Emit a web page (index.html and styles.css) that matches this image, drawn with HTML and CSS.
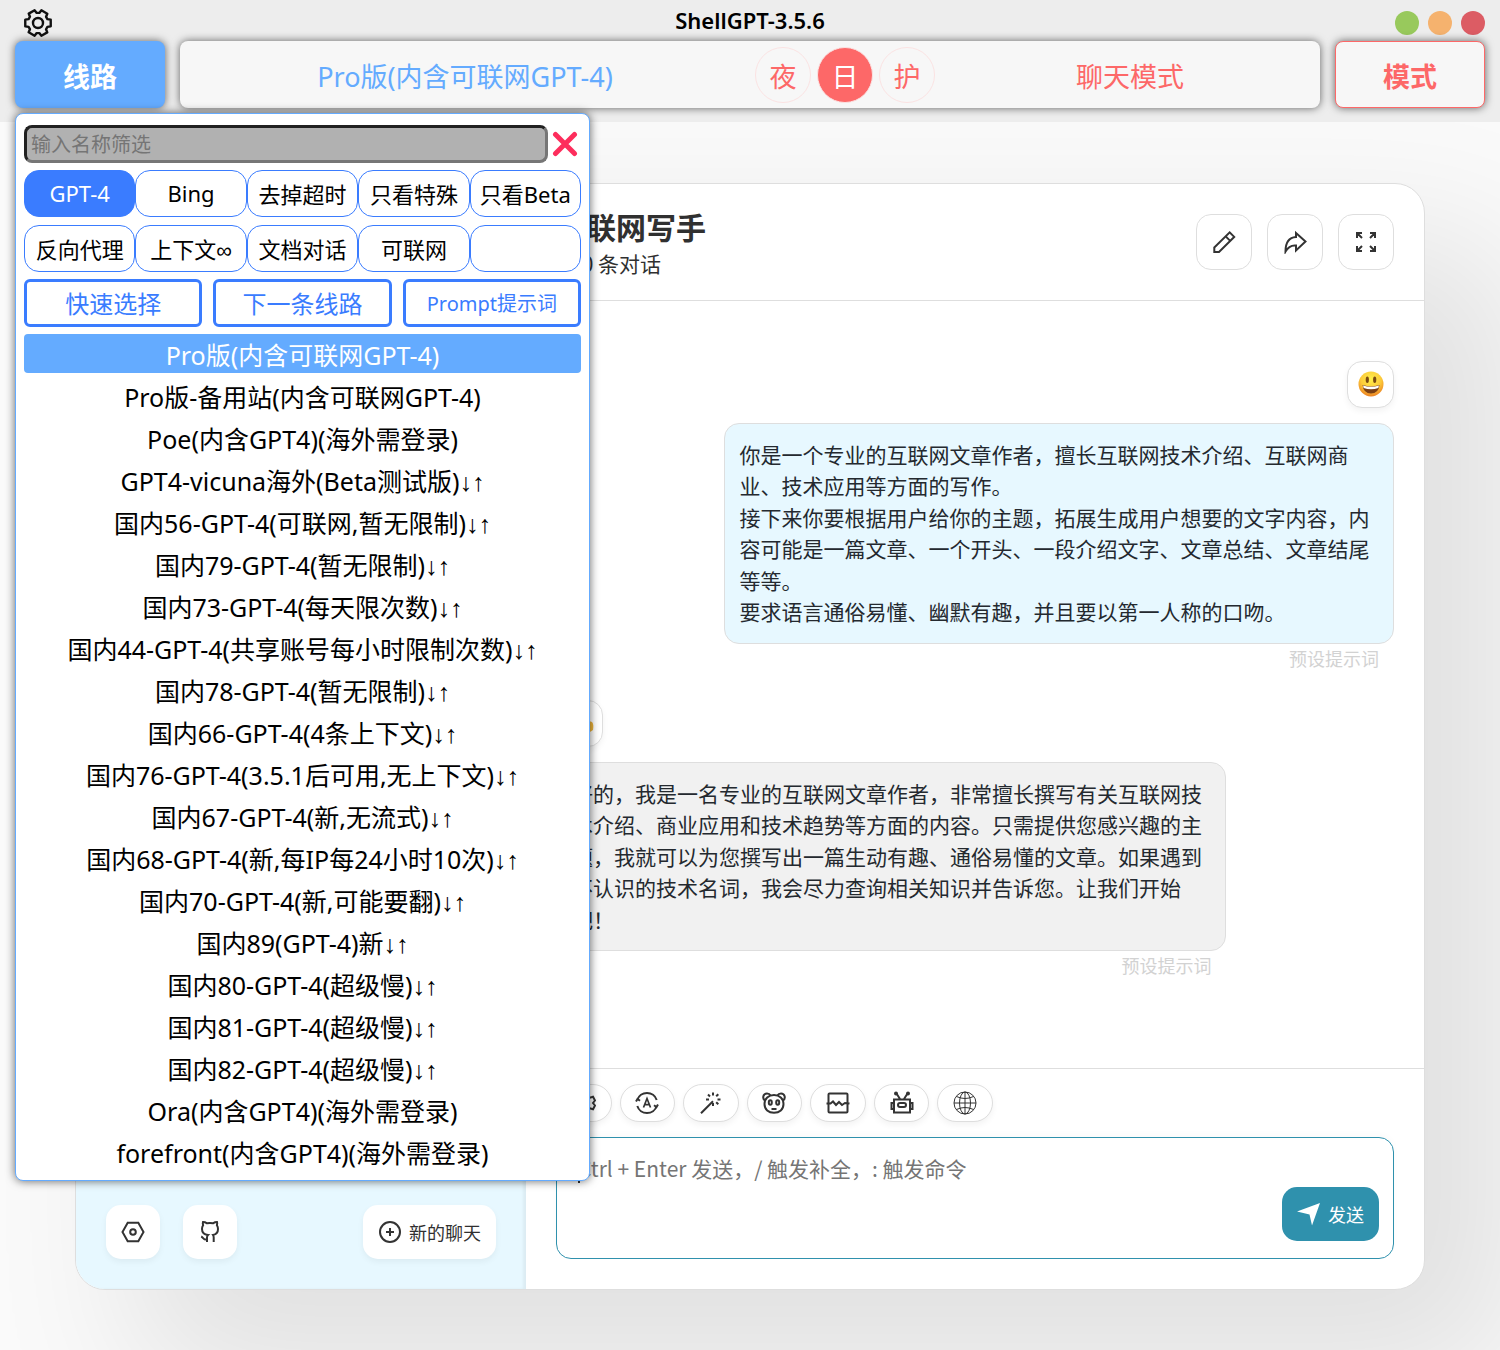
FILE: index.html
```html
<!DOCTYPE html>
<html lang="zh-CN">
<head>
<meta charset="utf-8">
<meta name="viewport" content="width=device-width, initial-scale=1">
<title>ShellGPT-3.5.6</title>
<link rel="stylesheet" href="styles.css">
</head>
<body>
<header class="shell">
  <div class="titlebar">
    <button class="plain gear" aria-label="设置">
      <svg width="28" height="28" viewBox="0 0 28 28" fill="none" stroke="#111" stroke-width="2.4" stroke-linejoin="round"><path d="M10.6 1.3 H17.4 L17.9 4.6 L20.2 5.9 L23.3 4.7 L26.7 10.5 L24.1 12.6 V15.4 L26.7 17.5 L23.3 23.3 L20.2 22.1 L17.9 23.4 L17.4 26.7 H10.6 L10.1 23.4 L7.8 22.1 L4.7 23.3 L1.3 17.5 L3.9 15.4 V12.6 L1.3 10.5 L4.7 4.7 L7.8 5.9 L10.1 4.6 Z" transform="rotate(30 14 14)"/><circle cx="14" cy="14" r="5"/></svg>
    </button>
    <h1 class="app-title">ShellGPT-3.5.6</h1>
    <div class="dots">
      <button class="dot green" aria-label="最小化"></button>
      <button class="dot orange" aria-label="最大化"></button>
      <button class="dot red" aria-label="关闭"></button>
    </div>
  </div>
  <nav class="toolbar">
    <button class="side-btn line-btn">线路</button>
    <div class="status">
      <span class="status-line">Pro版(内含可联网GPT-4)</span>
      <div class="themes">
        <button class="theme">夜</button>
        <button class="theme on">日</button>
        <button class="theme">护</button>
      </div>
      <span class="status-mode">聊天模式</span>
    </div>
    <button class="side-btn mode-btn">模式</button>
  </nav>
  <section class="panel" aria-label="线路">
    <div class="search">
      <input class="search-box" type="text" placeholder="输入名称筛选" aria-label="输入名称筛选">
      <button class="plain close" aria-label="关闭">
        <svg width="26" height="26" viewBox="0 0 26 26" fill="none" stroke="#fd2d5c" stroke-width="5" stroke-linecap="round"><path d="M3.5 3.5 L22.5 22.5 M22.5 3.5 L3.5 22.5"/></svg>
      </button>
    </div>
    <div class="filters">
      <button class="filter on">GPT-4</button>
      <button class="filter">Bing</button>
      <button class="filter">去掉超时</button>
      <button class="filter">只看特殊</button>
      <button class="filter">只看Beta</button>
      <button class="filter">反向代理</button>
      <button class="filter">上下文∞</button>
      <button class="filter">文档对话</button>
      <button class="filter">可联网</button>
      <button class="filter" aria-label="空"></button>
    </div>
    <div class="quick">
      <button class="quick-btn">快速选择</button>
      <button class="quick-btn">下一条线路</button>
      <button class="quick-btn small">Prompt提示词</button>
    </div>
    <ul class="lines">
      <li><button class="line on">Pro版(内含可联网GPT-4)</button></li>
      <li><button class="line">Pro版-备用站(内含可联网GPT-4)</button></li>
      <li><button class="line">Poe(内含GPT4)(海外需登录)</button></li>
      <li><button class="line">GPT4-vicuna海外(Beta测试版)↓↑</button></li>
      <li><button class="line">国内56-GPT-4(可联网,暂无限制)↓↑</button></li>
      <li><button class="line">国内79-GPT-4(暂无限制)↓↑</button></li>
      <li><button class="line">国内73-GPT-4(每天限次数)↓↑</button></li>
      <li><button class="line">国内44-GPT-4(共享账号每小时限制次数)↓↑</button></li>
      <li><button class="line">国内78-GPT-4(暂无限制)↓↑</button></li>
      <li><button class="line">国内66-GPT-4(4条上下文)↓↑</button></li>
      <li><button class="line">国内76-GPT-4(3.5.1后可用,无上下文)↓↑</button></li>
      <li><button class="line">国内67-GPT-4(新,无流式)↓↑</button></li>
      <li><button class="line">国内68-GPT-4(新,每IP每24小时10次)↓↑</button></li>
      <li><button class="line">国内70-GPT-4(新,可能要翻)↓↑</button></li>
      <li><button class="line">国内89(GPT-4)新↓↑</button></li>
      <li><button class="line">国内80-GPT-4(超级慢)↓↑</button></li>
      <li><button class="line">国内81-GPT-4(超级慢)↓↑</button></li>
      <li><button class="line">国内82-GPT-4(超级慢)↓↑</button></li>
      <li><button class="line">Ora(内含GPT4)(海外需登录)</button></li>
      <li><button class="line">forefront(内含GPT4)(海外需登录)</button></li>
    </ul>
  </section>
</header>

<main class="stage">
  <div class="card">
    <aside class="sidebar">
      <div class="side-tools">
        <button class="tile" aria-label="设置">
          <svg class="icon" viewBox="0 0 24 24"><path d="M6.7 2.8 H17.3 L22.5 12 L17.3 21.2 H6.7 L1.5 12 Z"/><circle cx="12" cy="12" r="2.8"/></svg>
        </button>
        <a class="tile" href="#" aria-label="GitHub">
          <svg class="icon" viewBox="0 0 24 24"><path d="M9 22 V17.5 C9 16.3 9.3 15.6 10 15 C6.5 14.5 4 12.8 4 9 C4 7.5 4.4 6.3 5.1 5.3 C4.7 4 4.7 3 5 2 C6.3 2 7.8 2.5 9 3.3 C11 2.9 13 2.9 15 3.3 C16.2 2.5 17.7 2 19 2 C19.3 3 19.3 4 18.9 5.3 C19.6 6.3 20 7.5 20 9 C20 12.8 17.5 14.5 15 15 C15.5 15.7 15.7 16.5 15.7 17.5 V22 M9 19.5 C5.5 20.3 5.5 17.5 3.2 16.5"/></svg>
        </a>
      </div>
      <button class="tile new-chat">
        <svg class="icon" viewBox="0 0 24 24"><circle cx="12" cy="12" r="10"/><path d="M12 8 V16 M8 12 H16"/></svg>
        新的聊天
      </button>
    </aside>

    <section class="chat">
      <div class="chat-head">
        <div class="chat-heading">
          <h2 class="chat-title">互联网写手</h2>
          <p class="chat-sub">共 0 条对话</p>
        </div>
        <div class="head-tools">
          <button class="square" aria-label="编辑"><svg class="icon" viewBox="0 0 24 24"><path d="M2.3 17.5 L17.7 2.4 L22.2 6.9 L7 22 H2.3 Z M13.7 6.4 L18.2 10.9"/></svg></button>
          <button class="square" aria-label="分享"><svg class="icon" viewBox="0 0 24 24"><path d="M13 3 L22.5 11.5 L13 20.5 V15.5 C8.5 15 5 17 2.5 21.5 C2.5 13 6 7.5 13 7 Z"/></svg></button>
          <button class="square" aria-label="全屏"><svg class="icon" viewBox="0 0 24 24"><path d="M3 8 V3 H8 M3 3 L8 8 M16 3 H21 V8 M21 3 L16 8 M3 16 V21 H8 M3 21 L8 16 M16 21 H21 V16 M21 21 L16 16"/></svg></button>
        </div>
      </div>

      <div class="messages">
        <article class="message mine">
          <div class="avatar">
            <svg width="26" height="26" viewBox="0 0 26 26"><defs><radialGradient id="face" cx=".5" cy=".3" r=".75"><stop offset="0" stop-color="#fff04a"/><stop offset=".55" stop-color="#fcc93a"/><stop offset="1" stop-color="#e8731c"/></radialGradient></defs><circle cx="13" cy="13" r="12.5" fill="url(#face)"/><ellipse cx="9.3" cy="8.8" rx="1.6" ry="3.2" fill="#7a4a12"/><ellipse cx="16.7" cy="8.8" rx="1.6" ry="3.2" fill="#7a4a12"/><path d="M4.5 14 Q13 16.8 21.5 14 Q20.5 22.5 13 22.5 Q5.5 22.5 4.5 14 Z" fill="#7a3f14"/><path d="M5 14.5 Q13 17 21 14.5 L20.3 17 Q13 19.5 5.7 17 Z" fill="#fff"/></svg>
          </div>
          <div class="bubble">你是一个专业的互联网文章作者，擅长互联网技术介绍、互联网商业、技术应用等方面的写作。<br>接下来你要根据用户给你的主题，拓展生成用户想要的文字内容，内容可能是一篇文章、一个开头、一段介绍文字、文章总结、文章结尾等等。<br>要求语言通俗易懂、幽默有趣，并且要以第一人称的口吻。</div>
          <p class="note">预设提示词</p>
        </article>
        <article class="message">
          <div class="avatar">
            <svg width="28" height="26" viewBox="0 0 28 26"><path d="M2 10 Q8 4 14 8 L26 12 Q28 14 27 20 Q22 24 12 23 Q4 22 2 10 Z" fill="#f0b63c"/></svg>
          </div>
          <div class="bubble">好的，我是一名专业的互联网文章作者，非常擅长撰写有关互联网技术介绍、商业应用和技术趋势等方面的内容。只需提供您感兴趣的主题，我就可以为您撰写出一篇生动有趣、通俗易懂的文章。如果遇到不认识的技术名词，我会尽力查询相关知识并告诉您。让我们开始吧！</div>
          <p class="note">预设提示词</p>
        </article>
      </div>

      <div class="composer">
        <div class="actions">
          <button class="pill" aria-label="对话设置"><svg class="icon" viewBox="0 0 24 24"><path d="M9.5 2 H14.5 L15.2 5 L18 6.6 L21 5.7 L23 9.5 L21 12 L23 14.5 L21 18.3 L18 17.4 L15.2 19 L14.5 22 H9.5 L8.8 19 L6 17.4 L3 18.3 L1 14.5 L3 12 L1 9.5 L3 5.7 L6 6.6 L8.8 5 Z"/><circle cx="12" cy="12" r="3"/></svg></button>
          <button class="pill" aria-label="自动主题"><svg class="icon" viewBox="0 0 24 24"><path d="M2.3 9 A10.2 10.2 0 0 1 21.7 9 M21.7 15 A10.2 10.2 0 0 1 2.3 15 M1 10.5 L2.5 8 L5 9.8 M23 13.5 L21.5 16 L19 14.2"/><path stroke-width="1.7" d="M8.5 16.5 L12 7.5 L15.5 16.5 M9.7 13.7 H14.3"/></svg></button>
          <button class="pill" aria-label="快捷指令"><svg class="icon" viewBox="0 0 24 24"><path d="M2 22.2 L14 10.2 M14 1.5 V4.5 M14 12 V15 M7 8.5 H10 M18.5 8.5 H21.5 M9 3.5 L11 5.5 M19.3 3.2 L17.2 5.3 M17.2 11.2 L19.3 13.3"/></svg></button>
          <button class="pill" aria-label="面具"><svg class="icon" viewBox="0 0 24 24"><path d="M3 9.5 C0 7.5 1 2.5 5 2.5 C7 2.5 8 3.5 8.5 4.5 M15.5 4.5 C16 3.5 17 2.5 19 2.5 C23 2.5 24 7.5 21 9.5"/><path d="M12 4 C17.5 4 21.5 7.5 21.5 13 C21.5 18.5 17.5 21.8 12 21.8 C6.5 21.8 2.5 18.5 2.5 13 C2.5 7.5 6.5 4 12 4 Z M9.5 18 H14.5"/><ellipse cx="8.3" cy="11.5" rx="1.5" ry="2.2"/><ellipse cx="15.7" cy="11.5" rx="1.5" ry="2.2"/></svg></button>
          <button class="pill" aria-label="清除聊天"><svg class="icon" viewBox="0 0 24 24"><path d="M2.500 12 V3.500 Q2.500 2.500 3.500 2.500 H20.500 Q21.500 2.500 21.500 3.500 V12 M2.500 13 V20.500 Q2.500 21.500 3.500 21.500 H20.500 Q21.500 21.500 21.500 20.500 V13 M.5 12.500 H4.500 L7 10.500 L10 14 L13 11 L16 14 L19 12 L23.500 12.500"/></svg></button>
          <button class="pill" aria-label="模型"><svg class="icon" viewBox="0 0 24 24"><path d="M4 8.500 H20 V21.500 H4 Z M4 12 H1.500 V18 H4 M20 12 H22.500 V18 H20 M10 8 L6.500 2.500 M14 8 L17.500 2.500"/><rect x="8" y="12" width="8" height="4" rx="2"/><circle cx="6" cy="2.500" r="1"/><circle cx="18" cy="2.500" r="1"/></svg></button>
          <button class="pill" aria-label="联网"><svg class="icon thin" viewBox="0 0 24 24"><circle cx="12" cy="12" r="11"/><ellipse cx="12" cy="12" rx="5.5" ry="11"/><path d="M12 1 V23 M1 12 H23 M3.5 5.5 Q12 9.5 20.5 5.5 M3.5 18.5 Q12 14.5 20.5 18.5"/></svg></button>
        </div>
        <div class="entry">
          <textarea class="entry-box" placeholder="Ctrl + Enter 发送，/ 触发补全，: 触发命令" aria-label="消息"></textarea>
          <span class="caret"></span>
          <button class="send">
            <svg width="24" height="24" viewBox="0 0 24 24"><path d="M23 1 L15 23.5 L12.5 12.5 L0 9.5 Z" fill="#fff"/></svg>
            发送
          </button>
        </div>
      </div>
    </section>
  </div>
</main>
</body>
</html>
```

FILE: styles.css
```css
:root {
  --blue: #64abff;
  --strong-blue: #3a7cff;
  --coral: #fd6868;
  --teal: #2f91ad;
  --ink: #303030;
  --line: #dedede;
  --ui: "Noto Sans", "Liberation Sans", "Noto Sans CJK SC", sans-serif;
  --text: "Noto Sans CJK SC", sans-serif;
}

* { box-sizing: border-box; }

body {
  margin: 0;
  background: #fafafa;
  color: var(--ink);
  font-family: var(--text);
}

h1, h2, p, ul { margin: 0; padding: 0; }
ul { list-style: none; }
button { margin: 0; padding: 0; border: 0; font: inherit; color: inherit; cursor: pointer; }
svg { display: block; }
.plain { background: none; }

/* Window bar */
.shell {
  position: relative;
  z-index: 2;
  height: 122px;
  padding: 0 15px;
  background: #ededed;
  font-family: var(--ui);
  color: #000;
}

.titlebar {
  display: grid;
  grid-template-columns: 1fr auto 1fr;
  align-items: center;
  height: 41px;
  padding-top: 4px;
}
.gear { justify-self: start; margin-left: 9px; }
.app-title { font-size: 22px; font-weight: 600; line-height: 24px; padding-bottom: 6px; }
.dots { display: flex; gap: 9px; justify-self: end; }
.dot { width: 24px; height: 24px; border-radius: 50%; }
.green { background: #98c95c; }
.orange { background: #f5b26e; }
.red { background: #dc5c64; }

.toolbar {
  display: grid;
  grid-template-columns: 150px 1fr 150px;
  gap: 15px;
  height: 67px;
  font-size: 27px;
}
.side-btn {
  padding-top: 2px;
  border-radius: 8px;
  font-weight: 700;
  box-shadow: 0 0 8px rgba(0, 0, 0, .6);
}
.line-btn { background: var(--blue); color: #fff; }
.mode-btn { background: #f7f7f7; color: var(--coral); border: 1px solid var(--coral); }

.status {
  display: grid;
  grid-template-columns: 3fr 1fr 2fr;
  align-items: center;
  justify-items: center;
  border-radius: 8px;
  background: #f7f7f7;
  box-shadow: 0 0 8px rgba(0, 0, 0, .6);
}
.status-line { padding-top: 2px; color: var(--blue); }
.status-mode { padding-top: 2px; color: var(--coral); }
.themes { display: flex; gap: 6px; }
.theme {
  width: 56px;
  height: 56px;
  padding-top: 2px;
  border: 1px solid #fbe3e3;
  border-radius: 50%;
  background: transparent;
  color: var(--coral);
}
.theme.on { background: var(--coral); color: #fff; }

/* Line picker, dropped over the page */
.panel {
  position: absolute;
  top: 113px;
  left: 15px;
  width: 575px;
  padding: 11px 8px 9px;
  border: 1px solid var(--blue);
  border-radius: 8px;
  background: #fff;
  box-shadow: 0 0 10px rgba(0, 0, 0, .6);
}
.search { display: flex; align-items: center; gap: 4px; padding-right: 3px; }
.search-box {
  flex: 1;
  min-width: 0;
  height: 38px;
  padding: 0 4px;
  border: 3px inset #767676;
  border-radius: 8px;
  background: #b1b1b1;
  font: 20px var(--ui);
}
.search-box::placeholder { color: #757575; }

.filters {
  display: grid;
  grid-template-columns: repeat(5, 1fr);
  gap: 8px 0;
  margin-top: 7px;
}
.filter {
  height: 47px;
  padding-bottom: 2px;
  border: 1px solid var(--strong-blue);
  border-radius: 15px;
  background: #fff;
  font-size: 22px;
  white-space: nowrap;
}
.filter.on { background: var(--strong-blue); color: #fff; }

.quick {
  display: grid;
  grid-template-columns: repeat(3, 1fr);
  gap: 11px;
  margin-top: 7px;
}
.quick-btn {
  height: 48px;
  padding-bottom: 2px;
  border: 3px solid var(--strong-blue);
  border-radius: 6px;
  background: #fff;
  color: var(--strong-blue);
  font-size: 24px;
}
.quick-btn.small { font-size: 20px; }

.lines { display: grid; gap: 3px; margin-top: 7px; }
.line {
  display: block;
  width: 100%;
  height: 39px;
  padding-top: 4px;
  border-radius: 4px;
  background: none;
  font-size: 25px;
  line-height: 35px;
  white-space: nowrap;
}
.line.on { background: var(--blue); color: #fff; }

/* Chat window */
.stage {
  display: flex;
  align-items: center;
  justify-content: center;
  min-height: calc(100vh - 122px);
  overflow: hidden;
}
.card {
  display: flex;
  width: 90%;
  min-height: 82vh;
  border: 1px solid var(--line);
  border-radius: 30px;
  overflow: hidden;
  background: #fff;
  box-shadow: 75px 75px 150px 15px rgba(0, 0, 0, .1);
}

.icon {
  width: 24px;
  height: 24px;
  fill: none;
  stroke: #333;
  stroke-width: 2;
}
.icon.thin { stroke-width: 1; }

.sidebar {
  display: flex;
  align-items: flex-end;
  justify-content: space-between;
  width: 450px;
  padding: 30px;
  background: #e7f8ff;
  box-shadow: inset -3px 0 3px rgba(0, 0, 0, .05);
}
.side-tools { display: flex; gap: 23px; }
.tile {
  display: flex;
  align-items: center;
  justify-content: center;
  gap: 7px;
  width: 54px;
  height: 54px;
  border-radius: 15px;
  background: #fff;
  font-size: 18px;
  box-shadow: 0 3px 6px rgba(0, 0, 0, .05);
}
.new-chat { width: 133px; }

.chat { display: flex; flex-direction: column; flex: 1; min-width: 0; }
.chat-head {
  display: flex;
  align-items: center;
  justify-content: space-between;
  height: 117px;
  padding: 0 30px;
  border-bottom: 1px solid var(--line);
}
.chat-title { font-size: 30px; line-height: 42px; }
.chat-sub { font-size: 21px; line-height: 32px; }
.head-tools { display: flex; gap: 15px; }
.square {
  display: grid;
  place-items: center;
  width: 56px;
  height: 56px;
  border: 1px solid var(--line);
  border-radius: 15px;
  background: #fff;
}

.messages { flex: 1; padding: 60px 30px; }
.message { display: flex; flex-direction: column; align-items: flex-start; }
.message + .message { margin-top: 28px; }
.mine { align-items: flex-end; }
.avatar {
  display: grid;
  place-items: center;
  width: 47px;
  height: 47px;
  border: 1px solid var(--line);
  border-radius: 15px;
  background: #fff;
  box-shadow: 0 3px 6px rgba(0, 0, 0, .05);
}
.bubble {
  max-width: 80%;
  margin-top: 15px;
  padding: 15px;
  border: 1px solid var(--line);
  border-radius: 15px;
  background: #f1f1f1;
  color: #24292f;
  font-size: 21px;
  line-height: 1.5;
}
.mine .bubble { background: #e7f8ff; }
.note {
  width: 80%;
  padding-right: 15px;
  color: #d2d2d2;
  font-size: 18px;
  line-height: 28px;
  text-align: right;
}

.composer { padding: 15px 30px 30px; border-top: 1px solid var(--line); }
.actions {
  display: grid;
  grid-template-columns: repeat(7, 1fr);
  gap: 8px;
  width: 437px;
}
.pill {
  display: grid;
  place-items: center;
  height: 38px;
  border: 1px solid var(--line);
  border-radius: 19px;
  background: #fff;
  box-shadow: 0 3px 6px rgba(0, 0, 0, .05);
}
.entry { position: relative; margin-top: 15px; }
.entry-box {
  display: block;
  width: 100%;
  height: 122px;
  padding: 15px 120px 15px 21px;
  border: 1px solid var(--teal);
  border-radius: 15px;
  background: #fff;
  box-shadow: 0 -3px 6px rgba(0, 0, 0, .02);
  color: var(--ink);
  font: 21px/30px var(--text);
  resize: none;
}
.entry-box::placeholder { color: #757575; }
.caret {
  position: absolute;
  top: 18px;
  left: 22px;
  width: 2px;
  height: 28px;
  background: var(--ink);
}
.send {
  position: absolute;
  right: 15px;
  bottom: 18px;
  display: flex;
  align-items: center;
  justify-content: center;
  gap: 7px;
  width: 97px;
  height: 54px;
  border-radius: 15px;
  background: var(--teal);
  color: #fff;
  font-size: 18px;
}
```
